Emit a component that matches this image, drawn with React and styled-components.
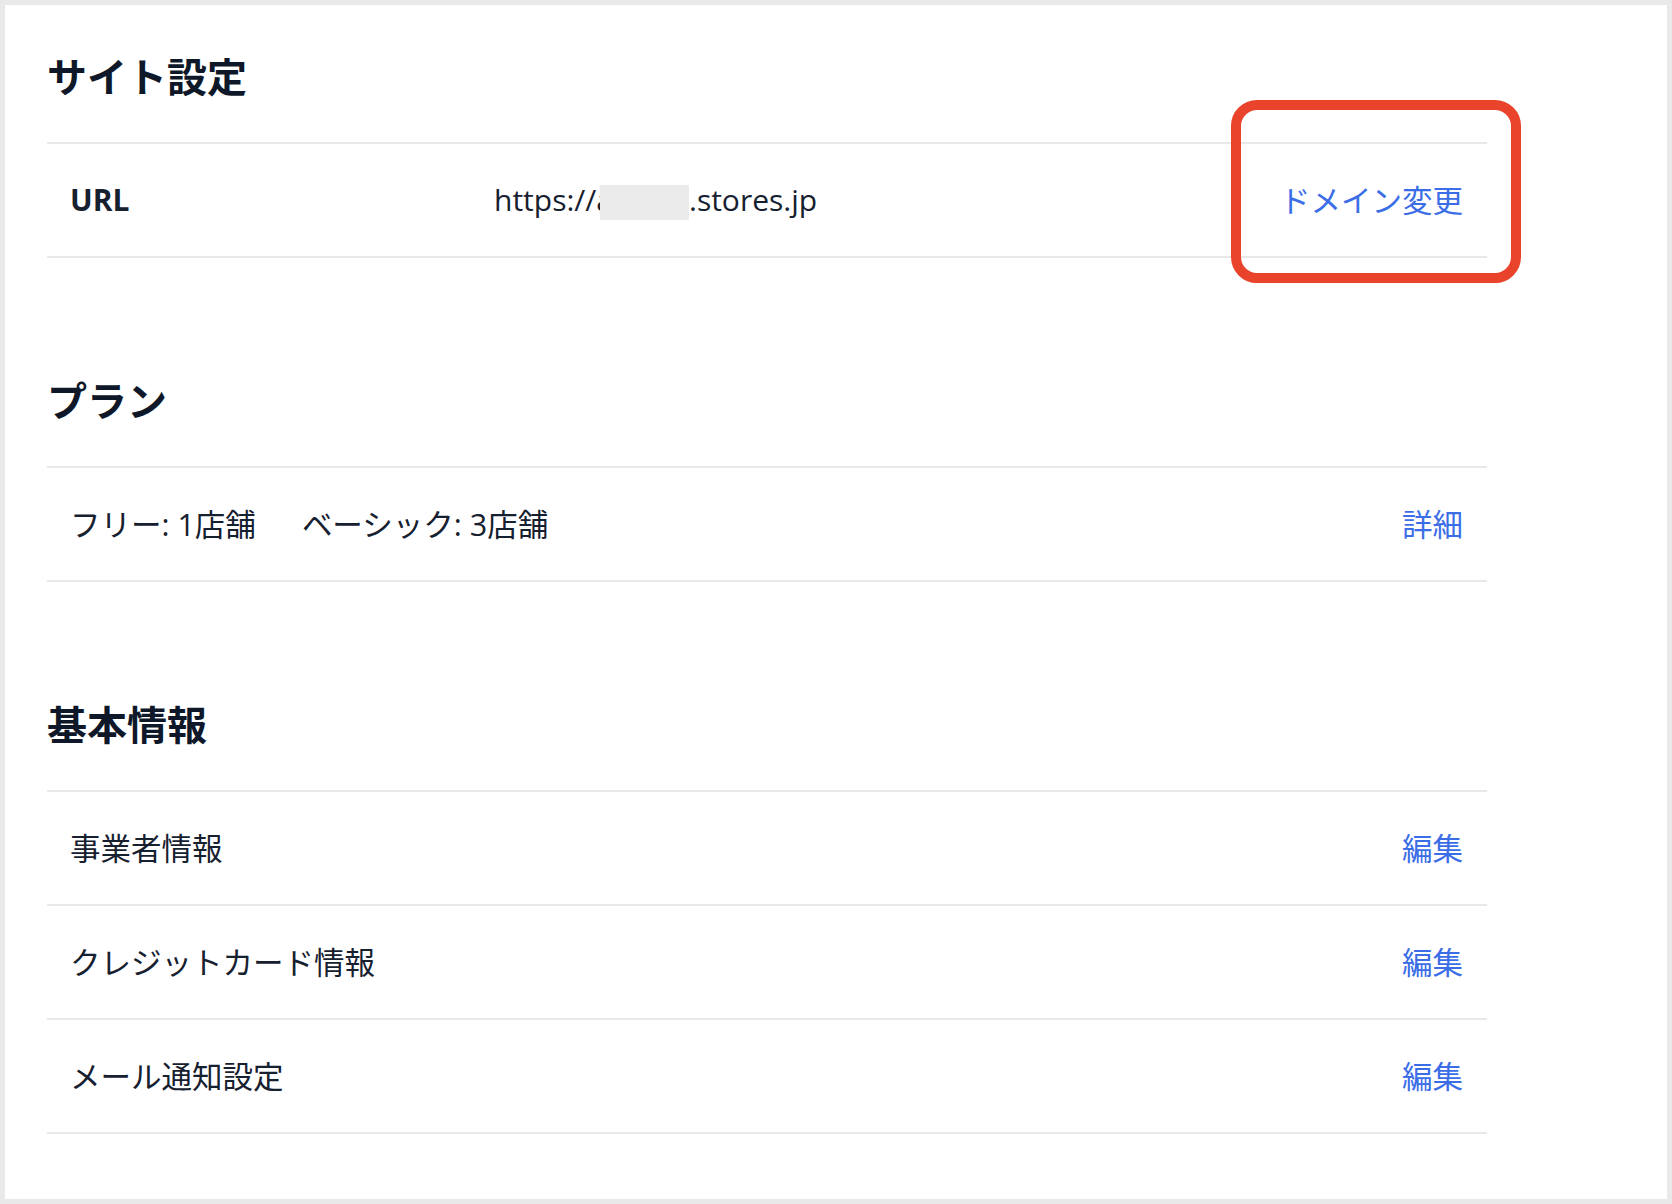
import styled, { createGlobalStyle } from "styled-components";

const GlobalStyle = createGlobalStyle`
  * {
    box-sizing: border-box;
  }
  body {
    margin: 0;
    background: #ffffff;
    font-family: "Open Sans", "Noto Sans CJK JP", sans-serif;
  }
`;

const Frame = styled.div`
  position: relative;
  width: 1672px;
  height: 1204px;
  border: 5px solid #e9e9e9;
  background-color: #ffffff;
  padding: 42px 0 0 42px;
  color: #16202f;
`;

const Section = styled.section`
  width: 1440px;
  margin-bottom: 113px;
`;

const Title = styled.h2`
  margin: 0 0 35px;
  font-size: 40px;
  line-height: 60px;
  font-weight: 700;
  color: #0e1829;
`;

const List = styled.ul`
  margin: 0;
  padding: 0;
  list-style: none;
  border-top: 2px solid #e8e8e6;
`;

const Row = styled.li`
  display: flex;
  align-items: center;
  height: 114px;
  padding: 0 24px 0 23px;
  border-bottom: 2px solid #e8e8e6;
  font-size: 30.5px;
  line-height: 1.4;
`;

const Label = styled.span`
  width: ${(p) => (p.$width ? `${p.$width}px` : "auto")};
  font-weight: ${(p) => (p.$bold ? 700 : 400)};
  font-size: ${(p) => (p.$bold ? "30px" : "inherit")};
  color: #16202f;
`;

const Value = styled.span`
  display: flex;
  align-items: center;
  gap: 46px;
  white-space: nowrap;
  font-size: ${(p) => (p.$latin ? "30px" : "inherit")};
`;

const Masked = styled.span`
  display: inline-block;
  width: 89px;
  height: 35px;
  margin-left: -13px;
  vertical-align: middle;
  background-color: #ebebeb;
`;

const Action = styled.a`
  margin-left: auto;
  color: #3b6ee6;
  text-decoration: none;
  cursor: pointer;
`;

const Highlight = styled.div`
  position: absolute;
  left: 1226px;
  top: 95px;
  width: 290px;
  height: 183px;
  border: 10px solid #e9432b;
  border-radius: 26px;
  pointer-events: none;
`;

const basicRows = ["事業者情報", "クレジットカード情報", "メール通知設定"];

export default function App() {
  return (
    <>
      <GlobalStyle />
      <Frame>
        <Section>
          <Title>サイト設定</Title>
          <List>
            <Row>
              <Label $bold $width={424}>
                URL
              </Label>
              <Value $latin>
                <span>
                  https://a
                  <Masked />
                  .stores.jp
                </span>
              </Value>
              <Action>ドメイン変更</Action>
            </Row>
          </List>
        </Section>

        <Section>
          <Title>プラン</Title>
          <List>
            <Row>
              <Value>
                <span>フリー: 1店舗</span>
                <span>ベーシック: 3店舗</span>
              </Value>
              <Action>詳細</Action>
            </Row>
          </List>
        </Section>

        <Section>
          <Title>基本情報</Title>
          <List>
            {basicRows.map((label) => (
              <Row key={label}>
                <Label>{label}</Label>
                <Action>編集</Action>
              </Row>
            ))}
          </List>
        </Section>

        <Highlight />
      </Frame>
    </>
  );
}
